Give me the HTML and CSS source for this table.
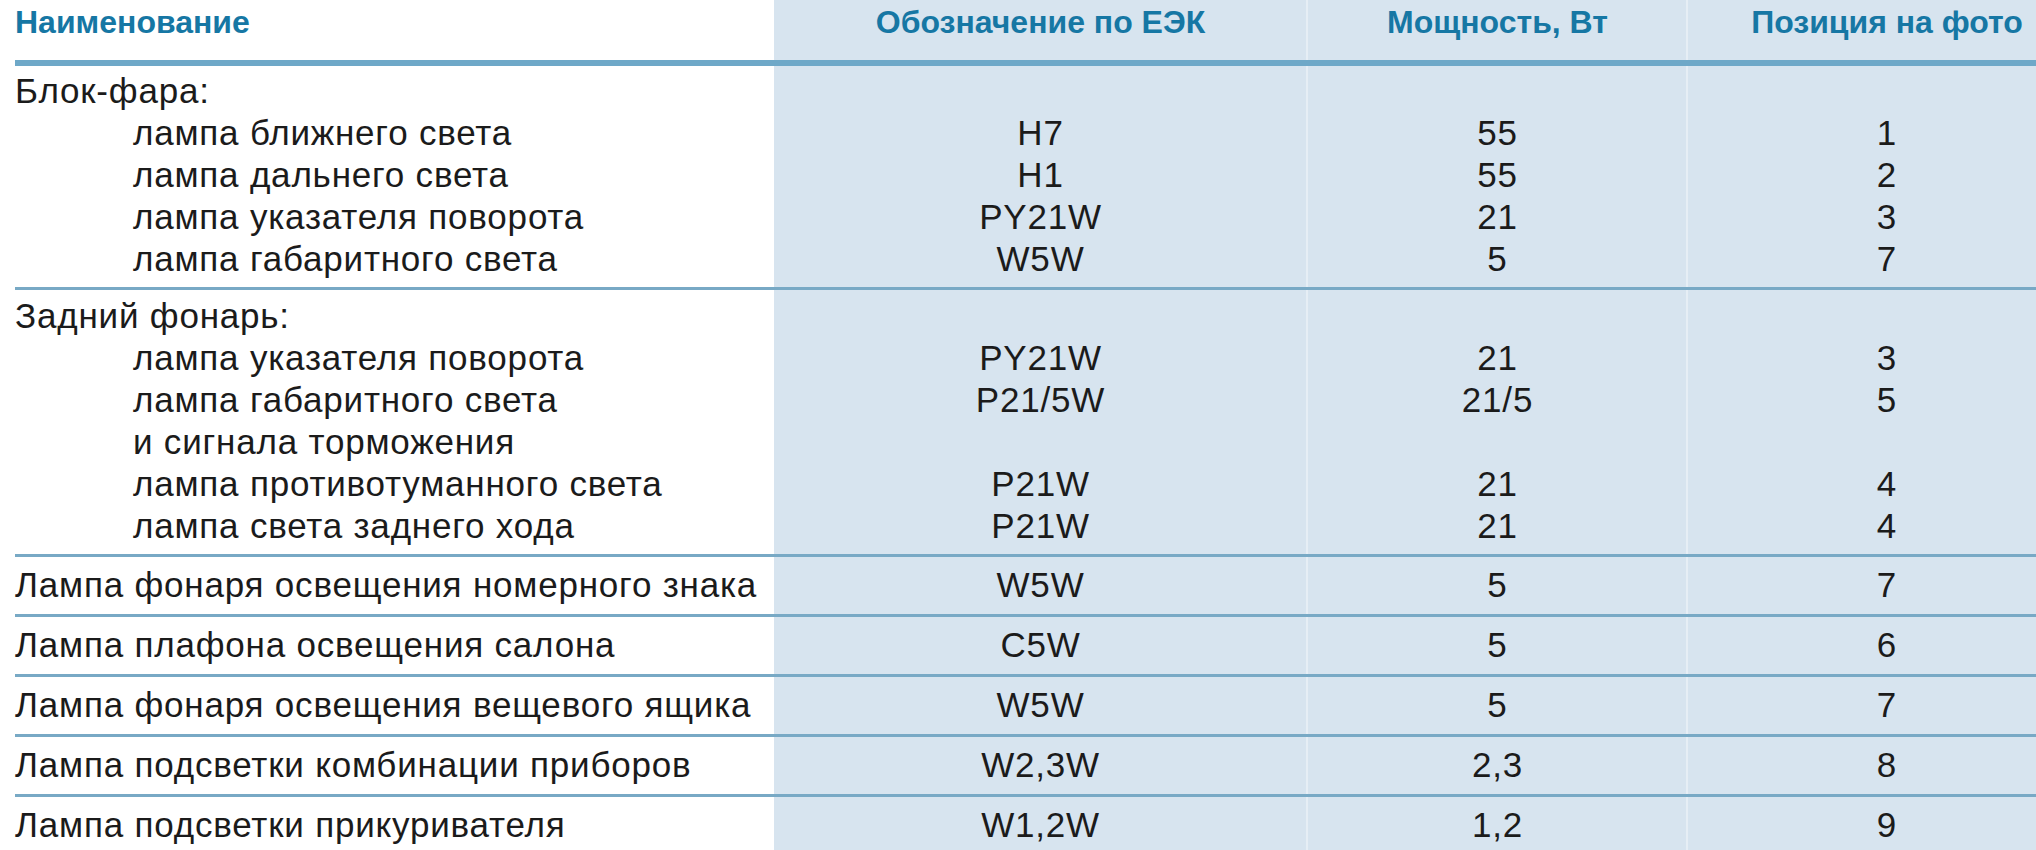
FILE: index.html
```html
<!DOCTYPE html>
<html lang="ru">
<head>
<meta charset="utf-8">
<title>Лампы</title>
<link rel="stylesheet" href="styles.css">
</head>
<body>
<div class="sheet">
  <div class="row head">
    <div class="line">
      <div class="c1">Наименование</div>
      <div class="c">Обозначение по ЕЭК</div>
      <div class="c">Мощность, Вт</div>
      <div class="c">Позиция на фото</div>
    </div>
  </div>

  <div class="row group">
    <div class="line"><div class="c1">Блок-фара:</div><div class="c"></div><div class="c"></div><div class="c"></div></div>
    <div class="line"><div class="c1 sub">лампа ближнего света</div><div class="c">H7</div><div class="c">55</div><div class="c">1</div></div>
    <div class="line"><div class="c1 sub">лампа дальнего света</div><div class="c">H1</div><div class="c">55</div><div class="c">2</div></div>
    <div class="line"><div class="c1 sub">лампа указателя поворота</div><div class="c">PY21W</div><div class="c">21</div><div class="c">3</div></div>
    <div class="line"><div class="c1 sub">лампа габаритного света</div><div class="c">W5W</div><div class="c">5</div><div class="c">7</div></div>
  </div>

  <div class="row group">
    <div class="line"><div class="c1">Задний фонарь:</div><div class="c"></div><div class="c"></div><div class="c"></div></div>
    <div class="line"><div class="c1 sub">лампа указателя поворота</div><div class="c">PY21W</div><div class="c">21</div><div class="c">3</div></div>
    <div class="line"><div class="c1 sub">лампа габаритного света</div><div class="c">P21/5W</div><div class="c">21/5</div><div class="c">5</div></div>
    <div class="line"><div class="c1 sub">и сигнала торможения</div><div class="c"></div><div class="c"></div><div class="c"></div></div>
    <div class="line"><div class="c1 sub">лампа противотуманного света</div><div class="c">P21W</div><div class="c">21</div><div class="c">4</div></div>
    <div class="line"><div class="c1 sub">лампа света заднего хода</div><div class="c">P21W</div><div class="c">21</div><div class="c">4</div></div>
  </div>

  <div class="row single">
    <div class="line"><div class="c1">Лампа фонаря освещения номерного знака</div><div class="c">W5W</div><div class="c">5</div><div class="c">7</div></div>
  </div>
  <div class="row single">
    <div class="line"><div class="c1">Лампа плафона освещения салона</div><div class="c">C5W</div><div class="c">5</div><div class="c">6</div></div>
  </div>
  <div class="row single">
    <div class="line"><div class="c1">Лампа фонаря освещения вещевого ящика</div><div class="c">W5W</div><div class="c">5</div><div class="c">7</div></div>
  </div>
  <div class="row single">
    <div class="line"><div class="c1">Лампа подсветки комбинации приборов</div><div class="c">W2,3W</div><div class="c">2,3</div><div class="c">8</div></div>
  </div>
  <div class="row single last">
    <div class="line"><div class="c1">Лампа подсветки прикуривателя</div><div class="c">W1,2W</div><div class="c">1,2</div><div class="c">9</div></div>
  </div>
</div>
</body>
</html>
```

FILE: styles.css
```css
html, body {
  margin: 0;
  padding: 0;
}

body {
  width: 2036px;
  height: 850px;
  overflow: hidden;
  background: #ffffff;
}

.sheet {
  width: 2086px;
  height: 900px;
  font-family: "Liberation Sans", Arial, sans-serif;
  color: #1b1b1b;
  background: linear-gradient(to right,
    #ffffff 0, #ffffff 774px,
    #d7e4ef 774px, #d7e4ef 1306px,
    #e6eef5 1306px, #e6eef5 1308px,
    #d7e4ef 1308px, #d7e4ef 1686px,
    #e6eef5 1686px, #e6eef5 1688px,
    #d7e4ef 1688px);
}

.row {
  margin-left: 15px;
}

.line {
  display: grid;
  grid-template-columns: 759px 533px 381px 398px;
  height: 42px;
  line-height: 42px;
  font-size: 35px;
  letter-spacing: 0.8px;
  white-space: nowrap;
}

.c1 {
  text-align: left;
}

.c1.sub {
  padding-left: 118px;
}

.c {
  text-align: center;
}

.head {
  padding-top: 2px;
  height: 58px;
  border-bottom: 6px solid #6ea8c8;
}

.head .line {
  height: 40px;
  line-height: 40px;
  font-size: 32px;
  font-weight: bold;
  letter-spacing: 0;
  color: #1677a4;
}

.group {
  padding-top: 4px;
  padding-bottom: 7px;
  border-bottom: 3px solid #78a9c5;
}

.group + .group {
  padding-top: 5px;
}

.single {
  padding-top: 7px;
  padding-bottom: 8px;
  border-bottom: 3px solid #78a9c5;
}

.single.last {
  border-bottom: none;
}
```
